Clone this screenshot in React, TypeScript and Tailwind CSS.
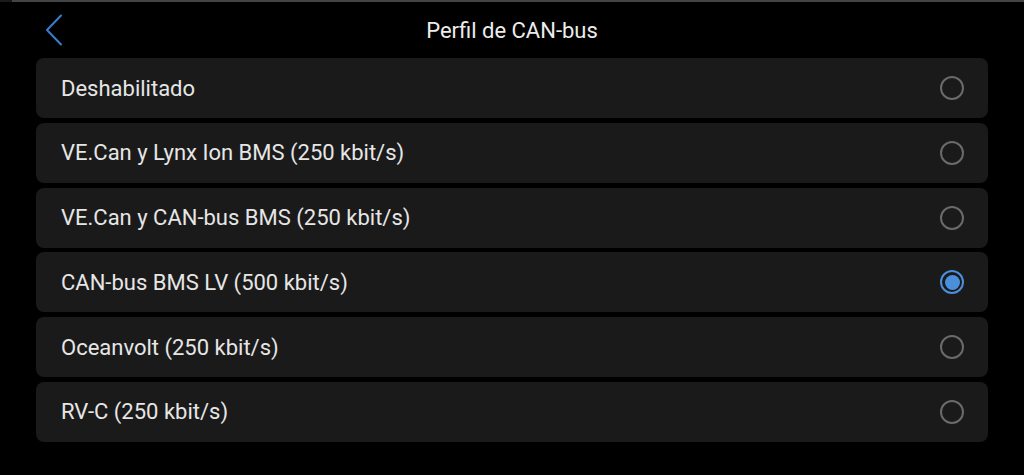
const options = [
  'Deshabilitado',
  'VE.Can y Lynx Ion BMS (250 kbit/s)',
  'VE.Can y CAN-bus BMS (250 kbit/s)',
  'CAN-bus BMS LV (500 kbit/s)',
  'Oceanvolt (250 kbit/s)',
  'RV-C (250 kbit/s)',
];

const selected = 3;

function Radio({ checked }: { checked: boolean }) {
  if (checked) {
    return (
      <div className="w-6 h-6 rounded-full border-2 border-[#4a8fdc] flex items-center justify-center">
        <div className="w-[15px] h-[15px] rounded-full bg-[#4a8fdc]" />
      </div>
    );
  }
  return <div className="w-6 h-6 rounded-full border-2 border-[#6a6a6a]" />;
}

export default function App() {
  return (
    <div
      className="w-[1024px] h-[475px] bg-black text-[#e8e8e8] overflow-hidden"
      style={{ fontFamily: 'Roboto, "Liberation Sans", sans-serif' }}
    >
      <div className="h-[2px] flex">
        <div className="w-3 bg-[#1a1a1a]" />
        <div className="flex-1 bg-[#444444]" />
      </div>

      {/* cabecera */}
      <div className="h-[56px] flex items-center relative">
        <div className="pl-[45px] flex items-center">
          <svg width="19" height="32" viewBox="0 0 19 32" fill="none">
            <polyline
              points="16,1.5 2,16 16,30.5"
              stroke="#3b7ccc"
              strokeWidth="2"
              strokeLinecap="round"
              strokeLinejoin="round"
            />
          </svg>
        </div>
        <div className="absolute inset-0 flex items-center justify-center text-[22px] text-[#ececec]">
          Perfil de CAN-bus
        </div>
      </div>

      {/* lista */}
      <div className="flex flex-col gap-[4.8px] pl-[36px] pr-[36px]">
        {options.map((label, i) => (
          <div
            key={label}
            className="h-[60px] rounded-[8px] bg-[#1a1a1a] flex items-center justify-between pl-[25px] pr-[24px]"
          >
            <span className="text-[22px] text-[#e6e6e6]">{label}</span>
            <Radio checked={i === selected} />
          </div>
        ))}
      </div>
    </div>
  );
}
